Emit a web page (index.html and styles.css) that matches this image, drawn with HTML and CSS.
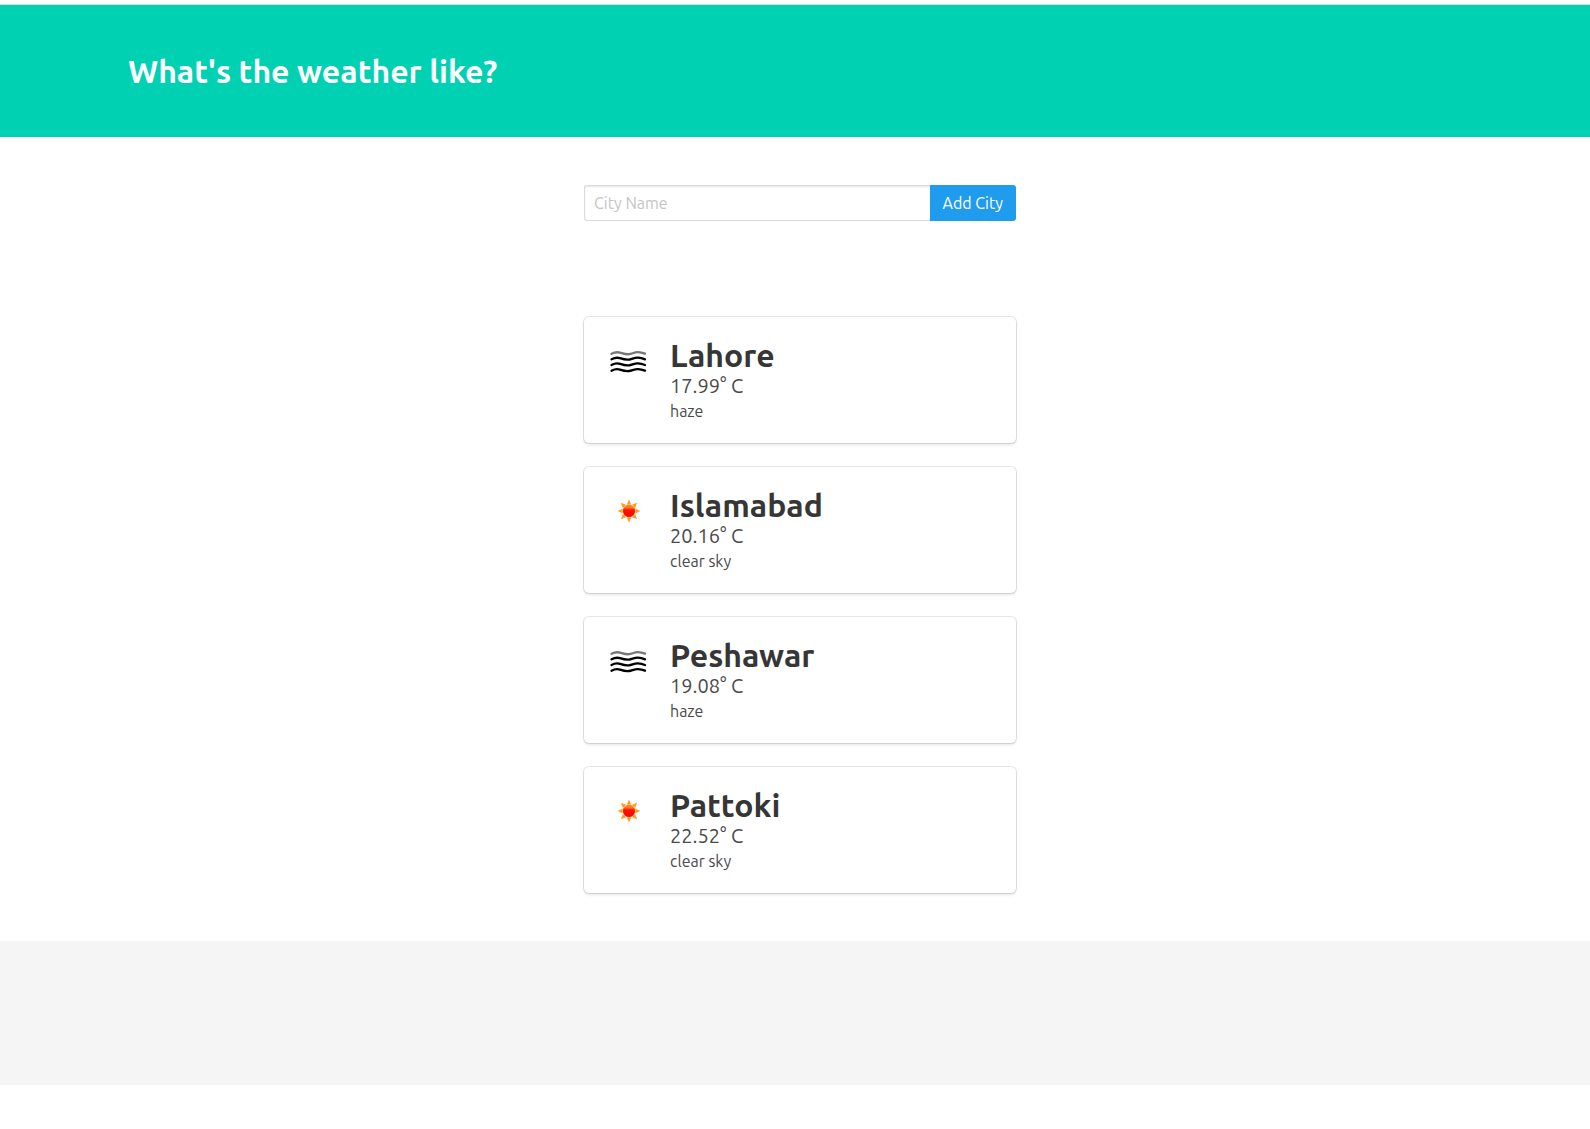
FILE: index.html
```html
<!DOCTYPE html>
<html lang="en">
<head>
  <meta charset="utf-8">
  <meta name="viewport" content="width=device-width, initial-scale=1">
  <title>What's the weather like?</title>
  <link rel="stylesheet" href="styles.css">
</head>
<body>
  <svg class="sprite" aria-hidden="true">
    <symbol id="haze" viewBox="0 0 50 50">
      <g fill="none" stroke="#000" stroke-width="2.300" stroke-linecap="round">
        <path stroke="#777" d="M7.500 16.700C10 15.500 13 14.800 16 15.600S22 17.600 25 17.200S31 15 34 15.200S39 16 41 16.700"/>
        <path d="M7.500 22.300C10 21 13 20.200 16 21.200S22 23 25 22.600S31 20.400 34 20.700S39 21.600 41 22.300"/>
        <path d="M7.500 28C10 26.700 13 25.900 16 26.900S22 28.700 25 28.300S31 26.100 34 26.400S39 27.300 41 28"/>
        <path d="M7.500 33.700C10 32.400 13 31.600 16 32.600S22 34.400 25 34S31 31.800 34 32.100S39 33 41 33.700"/>
      </g>
    </symbol>
    <symbol id="clear" viewBox="0 0 50 50">
      <linearGradient id="sun" x1="0" y1="0" x2="0" y2="1">
        <stop offset="0" stop-color="#ff7a10"/>
        <stop offset=".2" stop-color="#ff8030"/>
        <stop offset=".42" stop-color="#fb1400"/>
        <stop offset="1" stop-color="#ff0000"/>
      </linearGradient>
      <g fill="#ff9d1c">
        <path id="ray" d="M25 12.500l2.200 5h-4.400z"/>
        <use href="#ray" transform="rotate(45 25 24)"/>
        <use href="#ray" transform="rotate(90 25 24)"/>
        <use href="#ray" transform="rotate(135 25 24)"/>
        <use href="#ray" transform="rotate(180 25 24)"/>
        <use href="#ray" transform="rotate(225 25 24)"/>
        <use href="#ray" transform="rotate(270 25 24)"/>
        <use href="#ray" transform="rotate(315 25 24)"/>
      </g>
      <circle cx="25" cy="24" r="6.200" fill="url(#sun)" stroke="#ff8c1a" stroke-width=".4"/>
    </symbol>
  </svg>

  <header class="hero">
    <div class="container">
      <h1 class="title">What's the weather like?</h1>
    </div>
  </header>

  <main>
    <section class="section">
      <form class="column field">
        <input class="input" type="text" placeholder="City Name" aria-label="City Name">
        <button class="button" type="button">Add City</button>
      </form>
    </section>

    <section class="section">
      <div class="column cards">
        <article class="box">
          <svg class="icon" role="img" aria-label="haze"><use href="#haze"/></svg>
          <div class="content">
            <h2 class="title">Lahore</h2>
            <p class="temperature">17.99° C</p>
            <p>haze</p>
          </div>
        </article>
        <article class="box">
          <svg class="icon" role="img" aria-label="clear sky"><use href="#clear"/></svg>
          <div class="content">
            <h2 class="title">Islamabad</h2>
            <p class="temperature">20.16° C</p>
            <p>clear sky</p>
          </div>
        </article>
        <article class="box">
          <svg class="icon" role="img" aria-label="haze"><use href="#haze"/></svg>
          <div class="content">
            <h2 class="title">Peshawar</h2>
            <p class="temperature">19.08° C</p>
            <p>haze</p>
          </div>
        </article>
        <article class="box">
          <svg class="icon" role="img" aria-label="clear sky"><use href="#clear"/></svg>
          <div class="content">
            <h2 class="title">Pattoki</h2>
            <p class="temperature">22.52° C</p>
            <p>clear sky</p>
          </div>
        </article>
      </div>
    </section>
  </main>

  <footer class="footer"></footer>
</body>
</html>
```
FILE: styles.css
```css
*,
*::before,
*::after {
  box-sizing: border-box;
}

body {
  margin: 0;
  padding-top: 4px;
  background: #fff;
  color: #4a4a4a;
  font: 400 16px/24px Ubuntu, "Open Sans", "Noto Sans", sans-serif;
}

h1,
h2,
p {
  margin: 0;
}

.sprite {
  position: absolute;
  width: 0;
  height: 0;
}

.hero,
.section {
  padding: 48px 24px 48px 34px;
}

.hero {
  border-top: 1px solid #dbdbdb;
  background: #00d1b2;
}

.container {
  max-width: 1344px;
  margin: 0 auto;
}

.title {
  color: #363636;
  font-size: 32px;
  font-weight: 600;
  line-height: 36px;
}

.hero .title {
  color: #fff;
}

.column {
  width: 100%;
  max-width: 432px;
  margin: 0 auto;
}

.field {
  display: flex;
}

.input,
.button {
  height: 36px;
  font: inherit;
}

.input {
  flex: 1;
  min-width: 0;
  padding: 0 9px;
  border: 1px solid #dbdbdb;
  border-right: 0;
  border-radius: 3px 0 0 3px;
  background: #fff;
  color: #363636;
  box-shadow: inset 0 1px 2px rgba(10, 10, 10, 0.1);
}

.input::placeholder {
  color: #c4c4c4;
  opacity: 1;
}

.button {
  padding: 0 13px;
  border: 0;
  border-radius: 0 3px 3px 0;
  background: #209cee;
  color: #fff;
}

.cards {
  display: grid;
  gap: 24px;
}

.box {
  display: flex;
  gap: 16px;
  padding: 20px;
  border-radius: 5px;
  background: #fff;
  box-shadow: 0 2px 3px rgba(10, 10, 10, 0.1), 0 0 0 1px rgba(10, 10, 10, 0.1);
}

.icon {
  flex: none;
  width: 50px;
  height: 50px;
}

.temperature {
  font-size: 20px;
  line-height: 26px;
}

.footer {
  height: 144px;
  background: #f5f5f5;
}
```
